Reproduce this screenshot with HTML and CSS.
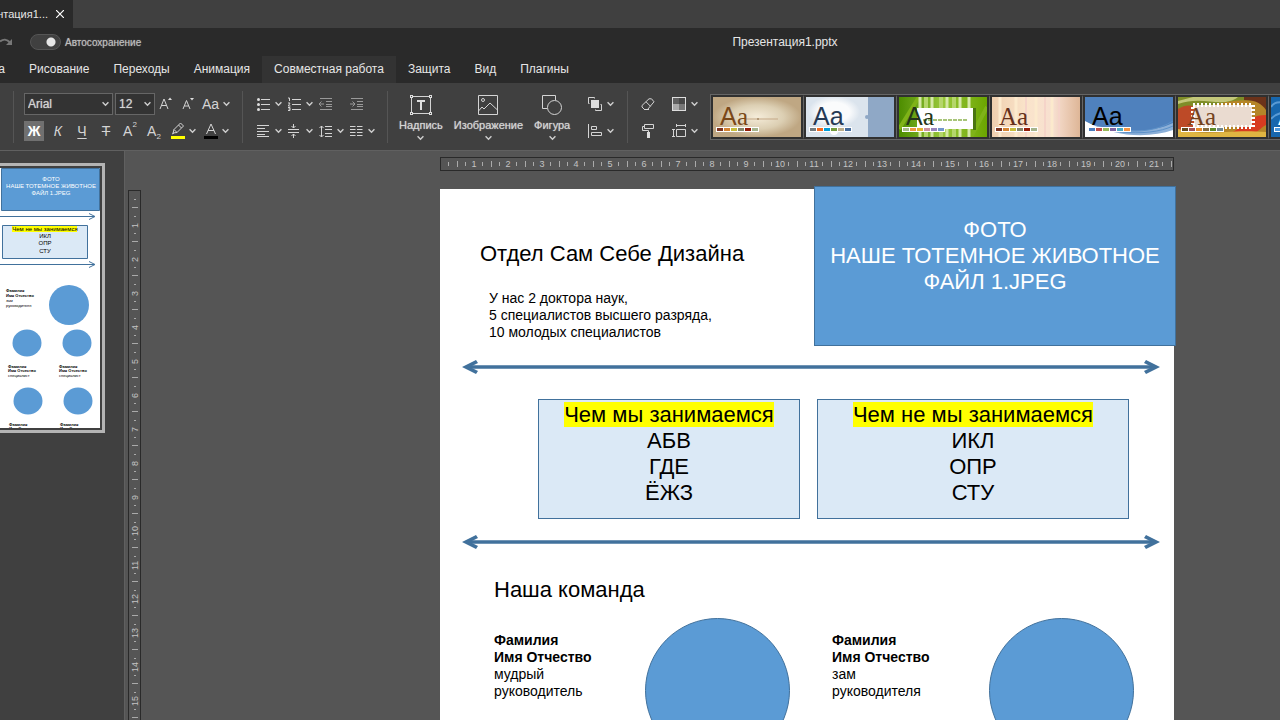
FILE: index.html
```html
<!DOCTYPE html>
<html lang="ru">
<head>
<meta charset="utf-8">
<title>Презентация1.pptx</title>
<link rel="stylesheet" href="styles.css">
</head>
<body>
<svg class="defs" aria-hidden="true">
  <symbol id="chev" viewBox="0 0 6 5"><path d="M.5 1 3 3.500 5.500 1" fill="none" stroke="#cfcfcf" stroke-width="1.200"/></symbol>
</svg>

<header class="tabstrip">
  <div class="filetab">
    <span>нтация1...</span>
    <button class="close" aria-label="Закрыть"><svg width="8" height="8" viewBox="0 0 8 8"><path d="M0 0 8 8M8 0 0 8" stroke="#fff" stroke-width="1.200"/></svg></button>
  </div>
</header>

<div class="titlebar">
  <div class="quick">
    <button class="redo" aria-label="Повторить"><svg width="13" height="8" viewBox="0 0 13 8"><path d="M0 3.500C3 1 7 1 10 4.500" fill="none" stroke="#777" stroke-width="2"/><path d="M12 1v6H6z" fill="#777"/></svg></button>
    <input class="switch" type="checkbox" id="autosave" checked>
    <label for="autosave">Автосохранение</label>
  </div>
  <div class="doctitle">Презентация1.pptx</div>
</div>

<nav class="menu">
  <button class="cut">а</button><button>Рисование</button><button>Переходы</button><button>Анимация</button><button class="active">Совместная работа</button><button>Защита</button><button>Вид</button><button>Плагины</button>
</nav>

<div class="toolbar">
  <div class="group edge"></div>
  <div class="group font">
    <div class="row">
      <div class="combo family"><select aria-label="Шрифт"><option>Arial</option></select><svg class="c"><use href="#chev"/></svg></div>
      <div class="combo size"><select aria-label="Размер"><option>12</option></select><svg class="c"><use href="#chev"/></svg></div>
      <button class="tool" aria-label="Увеличить"><svg width="14" height="14" viewBox="0 0 14 14"><path d="M1 12 5 2l4 10M2.500 8.500h5" class="s"/><path d="M9 3h4L11 .5z" class="f"/></svg></button>
      <button class="tool" aria-label="Уменьшить"><svg width="14" height="14" viewBox="0 0 14 14"><path d="M2 12 5.500 3.500 9 12M3.300 9h4.400" class="s"/><path d="M9 1h4l-2 2.500z" class="f"/></svg></button>
      <button class="tool wide">Aa<svg class="c"><use href="#chev"/></svg></button>
    </div>
    <div class="row">
      <button class="tool bold on">Ж</button>
      <button class="tool italic">К</button>
      <button class="tool under">Ч</button>
      <button class="tool strike">Т</button>
      <button class="tool">A<sup>2</sup></button>
      <button class="tool">A<sub>2</sub></button>
      <button class="tool wide" aria-label="Цвет выделения"><svg width="14" height="18" viewBox="0 0 14 18"><path d="M2 11 3 7.500 9.500 1l3 3L6 10.500zM7.500 3l3 3M3 7.500l3 3M1 12l2-1" class="s"/><path d="M0 14h14v3H0z" fill="#ff0"/></svg><svg class="c"><use href="#chev"/></svg></button>
      <button class="tool wide" aria-label="Цвет шрифта"><svg width="14" height="18" viewBox="0 0 14 18"><path d="M2.500 12 7 2l4.500 10M4 8.500h6" class="s"/><path d="M0 14h14v3H0z" fill="#000"/></svg><svg class="c"><use href="#chev"/></svg></button>
    </div>
  </div>
  <div class="group para">
    <div class="row">
      <button class="tool pair" aria-label="Маркеры"><svg width="13" height="14" viewBox="0 0 13 14"><path d="M4 2.500h9M4 7.500h9M4 12.500h9" class="s"/><circle cx="1.500" cy="2.500" r="1.500" class="f"/><circle cx="1.500" cy="7.500" r="1.500" class="f"/><circle cx="1.500" cy="12.500" r="1.500" class="f"/></svg><svg class="c"><use href="#chev"/></svg></button>
      <button class="tool pair" aria-label="Нумерация"><svg width="13" height="14" viewBox="0 0 13 14"><path d="M4 2.500h9M4 7.500h9M4 12.500h9M0 1h1.500v3M0 6h2L.3 9H2.500M0 10.500h2v3H0M.5 12h1.500" class="s"/></svg><svg class="c"><use href="#chev"/></svg></button>
      <button class="tool pair dim" aria-label="Уменьшить отступ"><svg width="13" height="12" viewBox="0 0 13 12"><path d="M1 .5h12M7 3.500h6M7 6.500h6M7 8.500h6M1 11.500h12M0 6h5M2.500 3.500 0 6l2.500 2.500" class="s"/></svg></button>
      <button class="tool pair dim" aria-label="Увеличить отступ"><svg width="13" height="12" viewBox="0 0 13 12"><path d="M1 .5h12M7 3.500h6M7 6.500h6M7 8.500h6M1 11.500h12M0 6h5M2.500 3.500 5 6 2.500 8.500" class="s"/></svg></button>
    </div>
    <div class="row">
      <button class="tool pair" aria-label="По левому краю"><svg width="13" height="12" viewBox="0 0 13 12"><path d="M0 .5h12M0 3.500h8M0 6.500h12M0 9.500h8M0 11.500h12" class="s"/></svg><svg class="c"><use href="#chev"/></svg></button>
      <button class="tool pair" aria-label="По середине"><svg width="13" height="14" viewBox="0 0 13 14"><path d="M0 5.500h11M0 8.500h11M5.500 0v4M5.500 10v4M3.500 2l2 2 2-2M3.500 12l2-2 2 2" class="s"/></svg><svg class="c"><use href="#chev"/></svg></button>
      <button class="tool pair" aria-label="Интервал"><svg width="13" height="13" viewBox="0 0 13 13"><path d="M2.500 1v11M.5 3l2-2 2 2M.5 10l2 2 2-2M6 1.500h7M6 4.500h7M6 8.500h7M6 11.500h7" class="s"/></svg><svg class="c"><use href="#chev"/></svg></button>
      <button class="tool pair" aria-label="Колонки"><svg width="13" height="12" viewBox="0 0 13 12"><path d="M0 1.500h5.500M0 4.500h5.500M0 7.500h5.500M0 10.500h5.500M7 1.500h5.500M7 4.500h5.500M7 7.500h5.500M7 10.500h5.500" class="s" /></svg><svg class="c"><use href="#chev"/></svg></button>
    </div>
  </div>
  <div class="group insert">
    <button class="big"><svg width="22" height="20" viewBox="0 0 22 20"><path d="M1.500 1.500h19v17h-19z" class="s"/><path d="M0 0h3v3H0zM19 0h3v3h-3zM0 17h3v3H0zM19 17h3v3h-3z" fill="#dedede"/><path d="M1 1h1v1H1zM20 1h1v1h-1zM1 18h1v1H1zM20 18h1v1h-1z" fill="#404040"/><path d="M7 6h8M11 6v9" stroke="#dedede" stroke-width="2"/></svg><span>Надпись</span><svg class="c"><use href="#chev"/></svg></button>
    <button class="big"><svg width="20" height="20" viewBox="0 0 20 20"><path d="M.5.5h19v19H.5zM.5 16l3.500-4 2 2L12 8l7.500 7" class="s"/><circle cx="5" cy="5" r="1.500" class="s"/></svg><span>Изображение</span><svg class="c"><use href="#chev"/></svg></button>
    <button class="big"><svg width="20" height="20" viewBox="0 0 20 20"><path d="M5 13.500H.5V.5h13V5" class="s"/><circle cx="12.500" cy="12.500" r="7" class="s"/></svg><span>Фигура</span><svg class="c"><use href="#chev"/></svg></button>
  </div>
  <div class="group arrange">
    <div class="row"><button class="tool pair" aria-label="Порядок"><svg width="14" height="14" viewBox="0 0 14 14"><path d="M3 3h8v8H3z" class="f"/><path d="M1.500 6.500h-1v-6h6v1M12.500 7.500h1v6h-6v-1" class="s"/></svg><svg class="c"><use href="#chev"/></svg></button></div>
    <div class="row"><button class="tool pair" aria-label="Выравнивание"><svg width="14" height="14" viewBox="0 0 14 14"><path d="M.5 0v14M3.500 2.500h5v3h-5zM3.500 8.500h10v3h-10z" class="s"/></svg><svg class="c"><use href="#chev"/></svg></button></div>
  </div>
  <div class="group design">
    <div class="row"><button class="tool pair" aria-label="Очистить"><svg width="14" height="13" viewBox="0 0 14 13"><path d="M1 7.500 8 .8l2.500 0 2.500 3L6.500 11.500h-3L1 9zM5 3.800l4.500 4.500M3 11.500h5" class="s"/></svg></button><button class="tool pair" aria-label="Цвета"><svg width="14" height="14" viewBox="0 0 14 14"><path d="M0 0h14v14H0z" fill="#dedede"/><path d="M1 1h6v6H1z" fill="#606060"/><path d="M7 1h6v6H7z" fill="#484848"/><path d="M1 7h6v6H1z" fill="#aaa"/><path d="M7 7h6v6H7z" fill="#777"/></svg><svg class="c"><use href="#chev"/></svg></button></div>
    <div class="row"><button class="tool pair" aria-label="Формат по образцу"><svg width="14" height="14" viewBox="0 0 14 14"><path d="M3.500.5h9v4h-9zM3.500 2.500h-2v4h6V9" class="s"/><path d="M6 8h3v6H6z" class="f"/></svg></button><button class="tool pair" aria-label="Размер слайда"><svg width="14" height="14" viewBox="0 0 14 14"><path d="M4.500 5.500h9v7h-9zM4 1.500h10M4.500 0v3M13.500 0v3M1.500 5v8M0 5.500h3M0 12.500h3" class="s"/></svg><svg class="c"><use href="#chev"/></svg></button></div>
  </div>
  <div class="gallery">
    <button aria-label="Тема 1"><svg viewBox="0 0 88 40"><defs><radialGradient id="g1"><stop offset="0" stop-color="#f5ecd9"/><stop offset=".6" stop-color="#dccfb3"/><stop offset="1" stop-color="#bfa783"/></radialGradient></defs><path d="M0 0h88v40H0z" fill="url(#g1)"/><path d="M33 22h32" stroke="#c4a887"/><circle cx="45" cy="22" r="1" fill="#a58866"/><text x="7" y="28" class="sans" fill="#7a4818">A</text><text x="24" y="28" class="serif" fill="#7a4818">a</text><path d="M3 30h43v5H3z" fill="#fff"/><path d="M4 31h6v3H4z" fill="#7f3520"/><path d="M11 31h6v3h-6z" fill="#d48332"/><path d="M18 31h6v3h-6z" fill="#c8bd3c"/><path d="M25 31h6v3h-6z" fill="#85856a"/><path d="M32 31h6v3h-6z" fill="#951d08"/><path d="M39 31h6v3h-6z" fill="#a6b48c"/></svg></button>
    <button aria-label="Тема 2"><svg viewBox="0 0 88 40"><defs><radialGradient id="g2"><stop offset=".6" stop-color="#fafbfc"/><stop offset="1" stop-color="#dbe4ed"/></radialGradient></defs><path d="M0 0h88v40H0z" fill="#dbe4ed"/><ellipse cx="28" cy="15" rx="26" ry="16" fill="url(#g2)"/><circle cx="28" cy="34" r="4" fill="#fff"/><path d="M62 0h26v40H62z" fill="#8fa8c6"/><circle cx="61" cy="20" r="2" fill="#8fa8c6"/><text x="7" y="28" class="sans" fill="#263a55">Aa</text><path d="M3 30h43v5H3z" fill="#fff"/><path d="M4 31h6v3H4z" fill="#727b80"/><path d="M11 31h6v3h-6z" fill="#f26a20"/><path d="M18 31h6v3h-6z" fill="#009dd8"/><path d="M25 31h6v3h-6z" fill="#739b3c"/><path d="M32 31h6v3h-6z" fill="#bdae8a"/><path d="M39 31h6v3h-6z" fill="#456c9c"/></svg></button>
    <button aria-label="Тема 3"><svg viewBox="0 0 88 40"><defs><linearGradient id="g3"><stop offset="0" stop-color="#4d8d00"/><stop offset=".5" stop-color="#99c83c"/><stop offset="1" stop-color="#6ba500"/></linearGradient></defs><path d="M0 0h88v40H0z" fill="url(#g3)"/><path d="M0 32 20 0M72 40 88 10" stroke="#7fb318" stroke-width="4"/><path d="M21 0v40M33 0v40M48 0v40M61 0v40M70 0v40" stroke="#d5e8a8" stroke-width="3"/><path d="M27 0v40M42 0v40M55 0v40" stroke="#b5d66c" stroke-width="4"/><path d="M74 11h3v22h-3z" fill="#4a7510"/><path d="M18 11h56v21H18z" fill="#fff"/><path d="M24 23h44" stroke="#a8c57a" stroke-width="2" stroke-dasharray="4 1"/><text x="7" y="28" class="sans" fill="#24351a">A</text><text x="24" y="28" class="serif" fill="#24351a">a</text><path d="M3 30h43v5H3z" fill="#fff"/><path d="M4 31h6v3H4z" fill="#a8bb89"/><path d="M11 31h6v3h-6z" fill="#f09840"/><path d="M18 31h6v3h-6z" fill="#e4b52e"/><path d="M25 31h6v3h-6z" fill="#ce91a0"/><path d="M32 31h6v3h-6z" fill="#9884be"/><path d="M39 31h6v3h-6z" fill="#7297cc"/></svg></button>
    <button aria-label="Тема 4"><svg viewBox="0 0 88 40"><defs><linearGradient id="g4"><stop offset="0" stop-color="#efcfaf"/><stop offset=".4" stop-color="#fae4cb"/><stop offset=".7" stop-color="#f7dfd0"/><stop offset="1" stop-color="#deb697"/></linearGradient></defs><path d="M0 0h88v40H0z" fill="url(#g4)"/><path d="M8 0v40M24 0v40M44 0v40M60 0v40" stroke="#fceacd" stroke-width="3"/><path d="M34 0v40M53 0v40M67 0v40" stroke="#f5d4c9" stroke-width="2"/><text x="7" y="28" class="serif" fill="#65301b">Aa</text><path d="M3 30h43v5H3z" fill="#fff"/><path d="M4 31h6v3H4z" fill="#7f3520"/><path d="M11 31h6v3h-6z" fill="#d48332"/><path d="M18 31h6v3h-6z" fill="#c8bd3c"/><path d="M25 31h6v3h-6z" fill="#85856a"/><path d="M32 31h6v3h-6z" fill="#951d08"/><path d="M39 31h6v3h-6z" fill="#a6b48c"/></svg></button>
    <button aria-label="Тема 5"><svg viewBox="0 0 88 40"><path d="M0 0h88v40H0z" fill="#4f81bd"/><path d="M0 25C30 36 65 37 88 26v14H0z" fill="#8cb0d8"/><path d="M0 24C30 41 65 41 88 33v7H0z" fill="#fff"/><path d="M35 33c20 3 38 0 53-9M35 35c22 2 40 0 53-6" fill="none" stroke="#5c91c9"/><text x="7" y="28" class="sans" fill="#000">Aa</text><path d="M3 30h43v5H3z" fill="#fff"/><path d="M4 31h6v3H4z" fill="#4a7dbf"/><path d="M11 31h6v3h-6z" fill="#bd4d4b"/><path d="M18 31h6v3h-6z" fill="#9aba59"/><path d="M25 31h6v3h-6z" fill="#7f63a1"/><path d="M32 31h6v3h-6z" fill="#4aabc5"/><path d="M39 31h6v3h-6z" fill="#f59545"/></svg></button>
    <button aria-label="Тема 6"><svg viewBox="0 0 88 40"><path d="M0 0h88v40H0z" fill="#b58528"/><path d="M0 0h88v5C60 0 30 6 0 22z" fill="#7f8d28"/><path d="M0 7C25-2 45 12 60 0H15L0 4z" fill="#c3c77a"/><path d="M0 12c20-12 30 10 12 28H0z" fill="#bd4a27"/><path d="M66 3c12 0 18 4 22 10V0H66z" fill="#6b321a"/><path d="M88 18C64 18 70 36 35 40h30c15-3 18-10 23-12z" fill="#d73b20"/><path d="M0 32c30 8 48 0 88 3v5H0z" fill="#dfb542"/><path d="M16 8h58v22H16z" fill="#eadbd0"/><path d="M15 8h60v22H15z" fill="none" stroke="#fff" stroke-width="4" stroke-dasharray="2 2"/><text x="9" y="28" class="serif" fill="#75421d">Aa</text><path d="M3 30h43v5H3z" fill="#fff"/><path d="M4 31h6v3H4z" fill="#63491c"/><path d="M11 31h6v3h-6z" fill="#a14f55"/><path d="M18 31h6v3h-6z" fill="#e58a27"/><path d="M25 31h6v3h-6z" fill="#866b40"/><path d="M32 31h6v3h-6z" fill="#5e8a27"/><path d="M39 31h6v3h-6z" fill="#71868b"/></svg></button>
    <button aria-label="Тема 7"><svg viewBox="0 0 88 40"><path d="M0 0h88v40H0z" fill="#1767ae"/><path d="M0 10C5 2 10 8 20 2M0 22c6-8 12-4 20-10" fill="none" stroke="#5a9bd5" stroke-width="2"/><text x="7" y="28" class="sans" fill="#fff">Aa</text><path d="M3 30h43v5H3z" fill="#fff"/><path d="M4 31h6v3H4z" fill="#4e9bdf"/></svg></button>
  </div>
</div>

<main class="work">
  <aside class="panel">
    <div class="thumb">
      <svg width="100" height="260" viewBox="0 0 100 260">
        <path d="M0 0h100v260H0z" fill="#fff"/>
        <path d="M1.500.5h98v42h-98z" fill="#5b9bd5" stroke="#41719c"/>
        <g class="t6" text-anchor="middle" fill="#fff"><text x="51" y="13">ФОТО</text><text x="51" y="20">НАШЕ ТОТЕМНОЕ ЖИВОТНОЕ</text><text x="51" y="27">ФАЙЛ 1.JPEG</text></g>
        <path d="M0 48.500h94M89 45.500l6 3-6 3M0 96.500h94M89 93.500l6 3-6 3" fill="none" stroke="#41719c"/>
        <path d="M2.500 57.500h85v33h-85z" fill="#dbe9f6" stroke="#41719c"/>
        <path d="M12 58h65v6H12z" fill="#ff0"/>
        <g class="t6" text-anchor="middle"><text x="45" y="63">Чем не мы занимаемся</text><text x="45" y="70">ИКЛ</text><text x="45" y="77">ОПР</text><text x="45" y="85">СТУ</text></g>
        <g fill="#5b9bd5"><circle cx="69" cy="137" r="20"/><ellipse cx="27" cy="175" rx="14.500" ry="13.500"/><ellipse cx="77" cy="175" rx="14.500" ry="13.500"/><ellipse cx="28" cy="233" rx="14.500" ry="13.500"/><ellipse cx="78" cy="233" rx="14.500" ry="13.500"/></g>
        <g class="t4 b"><text x="6" y="124">Фамилия</text><text x="6" y="129">Имя Отчество</text><text x="8" y="200">Фамилия</text><text x="8" y="204">Имя Отчество</text><text x="59" y="200">Фамилия</text><text x="59" y="204">Имя Отчество</text><text x="9" y="258">Фамилия</text><text x="9" y="262">Имя Отчество</text><text x="60" y="258">Фамилия</text><text x="60" y="262">Имя Отчество</text></g>
        <g class="t4"><text x="6" y="134">зам</text><text x="6" y="139">руководителя</text><text x="8" y="209">специалист</text><text x="59" y="209">специалист</text></g>
      </svg>
    </div>
  </aside>
  <div class="vcol"><div class="vruler"><span>1</span><span>2</span><span>3</span><span>4</span><span>5</span><span>6</span><span>7</span><span>8</span><span>9</span><span>10</span><span>11</span><span>12</span><span>13</span><span>14</span><span>15</span><span>16</span></div></div>
  <section class="stage">
    <div class="hruler"><span>1</span><span>2</span><span>3</span><span>4</span><span>5</span><span>6</span><span>7</span><span>8</span><span>9</span><span>10</span><span>11</span><span>12</span><span>13</span><span>14</span><span>15</span><span>16</span><span>17</span><span>18</span><span>19</span><span>20</span><span>21</span></div>
    <div class="slide">
      <h1 class="obj h heading">Отдел Сам Себе Дизайна</h1>
      <p class="obj small intro">У нас 2 доктора наук,<br>5 специалистов высшего разряда,<br>10 молодых специалистов</p>
      <div class="obj h photo">ФОТО<br>НАШЕ ТОТЕМНОЕ ЖИВОТНОЕ<br>ФАЙЛ 1.JPEG</div>
      <svg class="obj arrow a1" viewBox="0 0 698 14"><path d="M6 7h686" stroke="#41719c" stroke-width="3.500"/><path d="M0 7 14 0l2 3-8 4 8 4-2 3zM698 7 684 0l-2 3 8 4-8 4 2 3z" fill="#41719c"/></svg>
      <div class="obj h box we"><mark>Чем мы занимаемся</mark><br>АБВ<br>ГДЕ<br>ЁЖЗ</div>
      <div class="obj h box notwe"><mark>Чем не мы занимаемся</mark><br>ИКЛ<br>ОПР<br>СТУ</div>
      <svg class="obj arrow a2" viewBox="0 0 698 14"><path d="M6 7h686" stroke="#41719c" stroke-width="3.500"/><path d="M0 7 14 0l2 3-8 4 8 4-2 3zM698 7 684 0l-2 3 8 4-8 4 2 3z" fill="#41719c"/></svg>
      <h2 class="obj h team">Наша команда</h2>
      <p class="obj small p1"><b>Фамилия<br>Имя Отчество</b><br>мудрый<br>руководитель</p>
      <div class="obj circle c1"></div>
      <p class="obj small p2"><b>Фамилия<br>Имя Отчество</b><br>зам<br>руководителя</p>
      <div class="obj circle c2"></div>
    </div>
  </section>
</main>
</body>
</html>
```
FILE: styles.css
```css
* { box-sizing: border-box; }
body { margin: 0; height: 100vh; overflow: hidden; display: flex; flex-direction: column; background: #555; color: #e6e6e6; font: 12px "Liberation Sans", Arial, sans-serif; }
button { margin: 0; padding: 0; border: 0; background: none; color: inherit; font: inherit; }
svg { display: block; flex: none; }
.defs { position: absolute; width: 0; height: 0; }
.s { fill: none; stroke: #d4d4d4; stroke-width: 1; }
.f { fill: #dedede; }
.c { width: 7px; height: 6px; }

.tabstrip { flex: none; height: 28px; background: #404040; display: flex; }
.filetab { width: 73px; background: #2a2a2a; display: flex; align-items: center; justify-content: flex-end; gap: 8px; padding-right: 9px; font: 11px "Noto Sans", sans-serif; white-space: nowrap; overflow: hidden; }
.filetab span { flex: none; font: 11px "Liberation Sans", Arial, sans-serif; }
.titlebar { flex: none; height: 28px; background: #2a2a2a; display: grid; grid-template-columns: 290px 1fr; align-items: center; }
.quick { display: flex; align-items: center; color: #bdbdbd; font-size: 10px; text-shadow: 0 0 1px #999; }
.redo { width: 30px; }
.switch { appearance: none; margin: 0 4px 0 0; width: 31px; height: 16px; border: 1px solid #555; border-radius: 8px; background: radial-gradient(circle at 20px 7px, #e6e6e6 4px, #404040 5px); }
.doctitle { text-align: center; }
.menu { flex: none; height: 27px; background: #2a2a2a; display: flex; }
.menu button { padding: 0 12px 2px; white-space: nowrap; }
.menu .cut { width: 17px; padding-left: 0; display: flex; justify-content: flex-end; align-items: center; }
.menu .active { background: #333; }

.toolbar { flex: none; height: 68px; background: #404040; border-bottom: 1px solid #606060; display: flex; overflow: hidden; color: #d4d4d4; }
.group { flex: none; position: relative; padding-top: 9px; display: flex; flex-direction: column; gap: 3px; }
.group::after { content: ""; position: absolute; right: 0; top: 8px; width: 1px; height: 52px; background: #555; }
.edge { width: 14px; }
.font { width: 229px; padding-left: 10px; }
.para { width: 145px; padding-left: 14px; }
.arrange { width: 51px; padding-left: 11px; }
.design { width: 82px; padding-left: 13px; }
.insert::after, .design::after { display: none; }
.row { height: 24px; display: flex; align-items: center; }
.tool { flex: none; width: 22px; height: 20px; display: flex; align-items: center; justify-content: center; font-size: 14px; line-height: 20px; }
.row + .row .tool:not(.wide):not(.pair) { width: 20px; margin-right: 4px; }
.tool.wide { width: 33px; justify-content: flex-start; gap: 4px; padding-left: 3px; }
.tool.pair { width: 31px; justify-content: flex-start; gap: 5px; }
.dim { opacity: .6; }
.on { background: #707070; color: #fff; }
.bold { font-weight: bold; }
.italic { font-style: italic; }
.under { text-decoration: underline; text-underline-offset: 2px; }
.strike { text-decoration: line-through; }
.tool sup, .tool sub { font-size: 8px; line-height: 8px; }
.tool sup { align-self: flex-start; }
.tool sub { align-self: flex-end; }
.combo { position: relative; height: 22px; margin-right: 2px; }
.combo select { appearance: none; width: 100%; height: 22px; margin: 0; padding: 0 3px; border: 1px solid #666; border-radius: 0; background: #333; color: #d4d4d4; font: 12px "Liberation Sans", Arial, sans-serif; text-shadow: 0 0 1px #bbb; }
.combo .c { position: absolute; right: 4px; top: 8px; }
.family { width: 89px; }
.size { width: 40px; margin-right: 0; }
.insert { width: 189px; flex-direction: row; gap: 11px; padding: 12px 0 0 11px; align-items: flex-start; }
.big { display: flex; flex-direction: column; align-items: center; font-size: 11px; line-height: 12px; text-shadow: 0 0 1px #bbb; }
.big span { margin: 4px 0; }
.gallery { flex: 1; min-width: 0; display: flex; overflow: hidden; height: 46px; margin-top: 11px; border: 1px solid #666; border-right: 0; }
.gallery button { flex: none; width: 93px; height: 44px; border: 2px solid #303030; border-right: 1px solid #666; padding-right: 2px; background: #303030; }
.gallery svg { width: 88px; height: 40px; }
.sans { font: 25px "Liberation Sans", Arial, sans-serif; }
.serif { font: 25px "Liberation Serif", serif; }

.work { flex: 1; min-height: 0; display: flex; overflow: hidden; }
.panel { flex: none; width: 125px; background: #404040; border-right: 1px solid #606060; padding-top: 12px; }
.thumb { width: 105px; height: 270px; border: 3px solid #b4b4b4; border-left: 0; padding-top: 2px; background: #404040; }
.t6 { font: 6px "Liberation Sans", Arial, sans-serif; }
.t4 { font: 4px "Liberation Sans", Arial, sans-serif; }
.b { font-weight: bold; }
.vcol { flex: none; width: 16px; padding: 39px 0 0 3px; overflow: hidden; }
.hruler, .vruler { border: 1px solid #2a2a2a; color: #c4c4c4; font-size: 9px; display: flex; }
.hruler span, .vruler span { flex: none; display: flex; align-items: center; justify-content: center; }
.hruler { width: 734px; height: 14px; padding-left: 16px; margin-left: 299px; background: linear-gradient(90deg, transparent 7px, #aaa 7px, #aaa 8px, transparent 8px, transparent 24px, #aaa 24px, #aaa 25px, transparent 25px) 0 4px / 34px 4px repeat-x, linear-gradient(90deg, transparent 16px, #aaa 16px, #aaa 17px, transparent 17px) 0 3px / 34px 6px repeat-x; }
.hruler span { width: 34px; height: 12px; }
.vruler { width: 13px; flex-direction: column; padding-top: 17px; background: linear-gradient(transparent 8px, #aaa 8px, #aaa 9px, transparent 9px, transparent 25px, #aaa 25px, #aaa 26px, transparent 26px) 5px 0 / 2px 34px repeat-y, linear-gradient(transparent 16px, #aaa 16px, #aaa 17px, transparent 17px) 3px 0 / 6px 34px repeat-y; }
.vruler span { height: 34px; width: 11px; writing-mode: vertical-rl; transform: rotate(180deg); }

.stage { flex: 1; min-width: 0; padding-top: 6px; }
.slide { position: relative; width: 734px; height: 1040px; margin: 18px 0 0 299px; background: #fff; color: #000; }
.obj { position: absolute; margin: 0; white-space: nowrap; }
.h { font-size: 22px; line-height: 26px; font-weight: normal; }
.small { font-size: 14px; line-height: 17px; }
.heading { left: 40px; top: 52px; }
.intro { left: 49px; top: 101px; }
.photo { left: 374px; top: -3px; width: 362px; height: 160px; padding-top: 30px; background: #5b9bd5; border: 1px solid #41719c; color: #fff; text-align: center; }
.arrow { left: 22px; width: 698px; height: 14px; }
.a1 { top: 171px; }
.a2 { top: 346px; }
.box { top: 210px; height: 120px; padding-top: 2px; background: #dbe9f6; border: 1px solid #41719c; text-align: center; }
.we { left: 98px; width: 262px; }
.notwe { left: 377px; width: 312px; }
mark { background: #ff0; color: inherit; }
.team { left: 54px; top: 388px; }
.p1 { left: 54px; top: 443px; }
.p2 { left: 392px; top: 443px; }
.circle { top: 429px; width: 145px; height: 145px; border: 1px solid #41719c; border-radius: 50%; background: #5b9bd5; }
.c1 { left: 205px; }
.c2 { left: 549px; }
```
